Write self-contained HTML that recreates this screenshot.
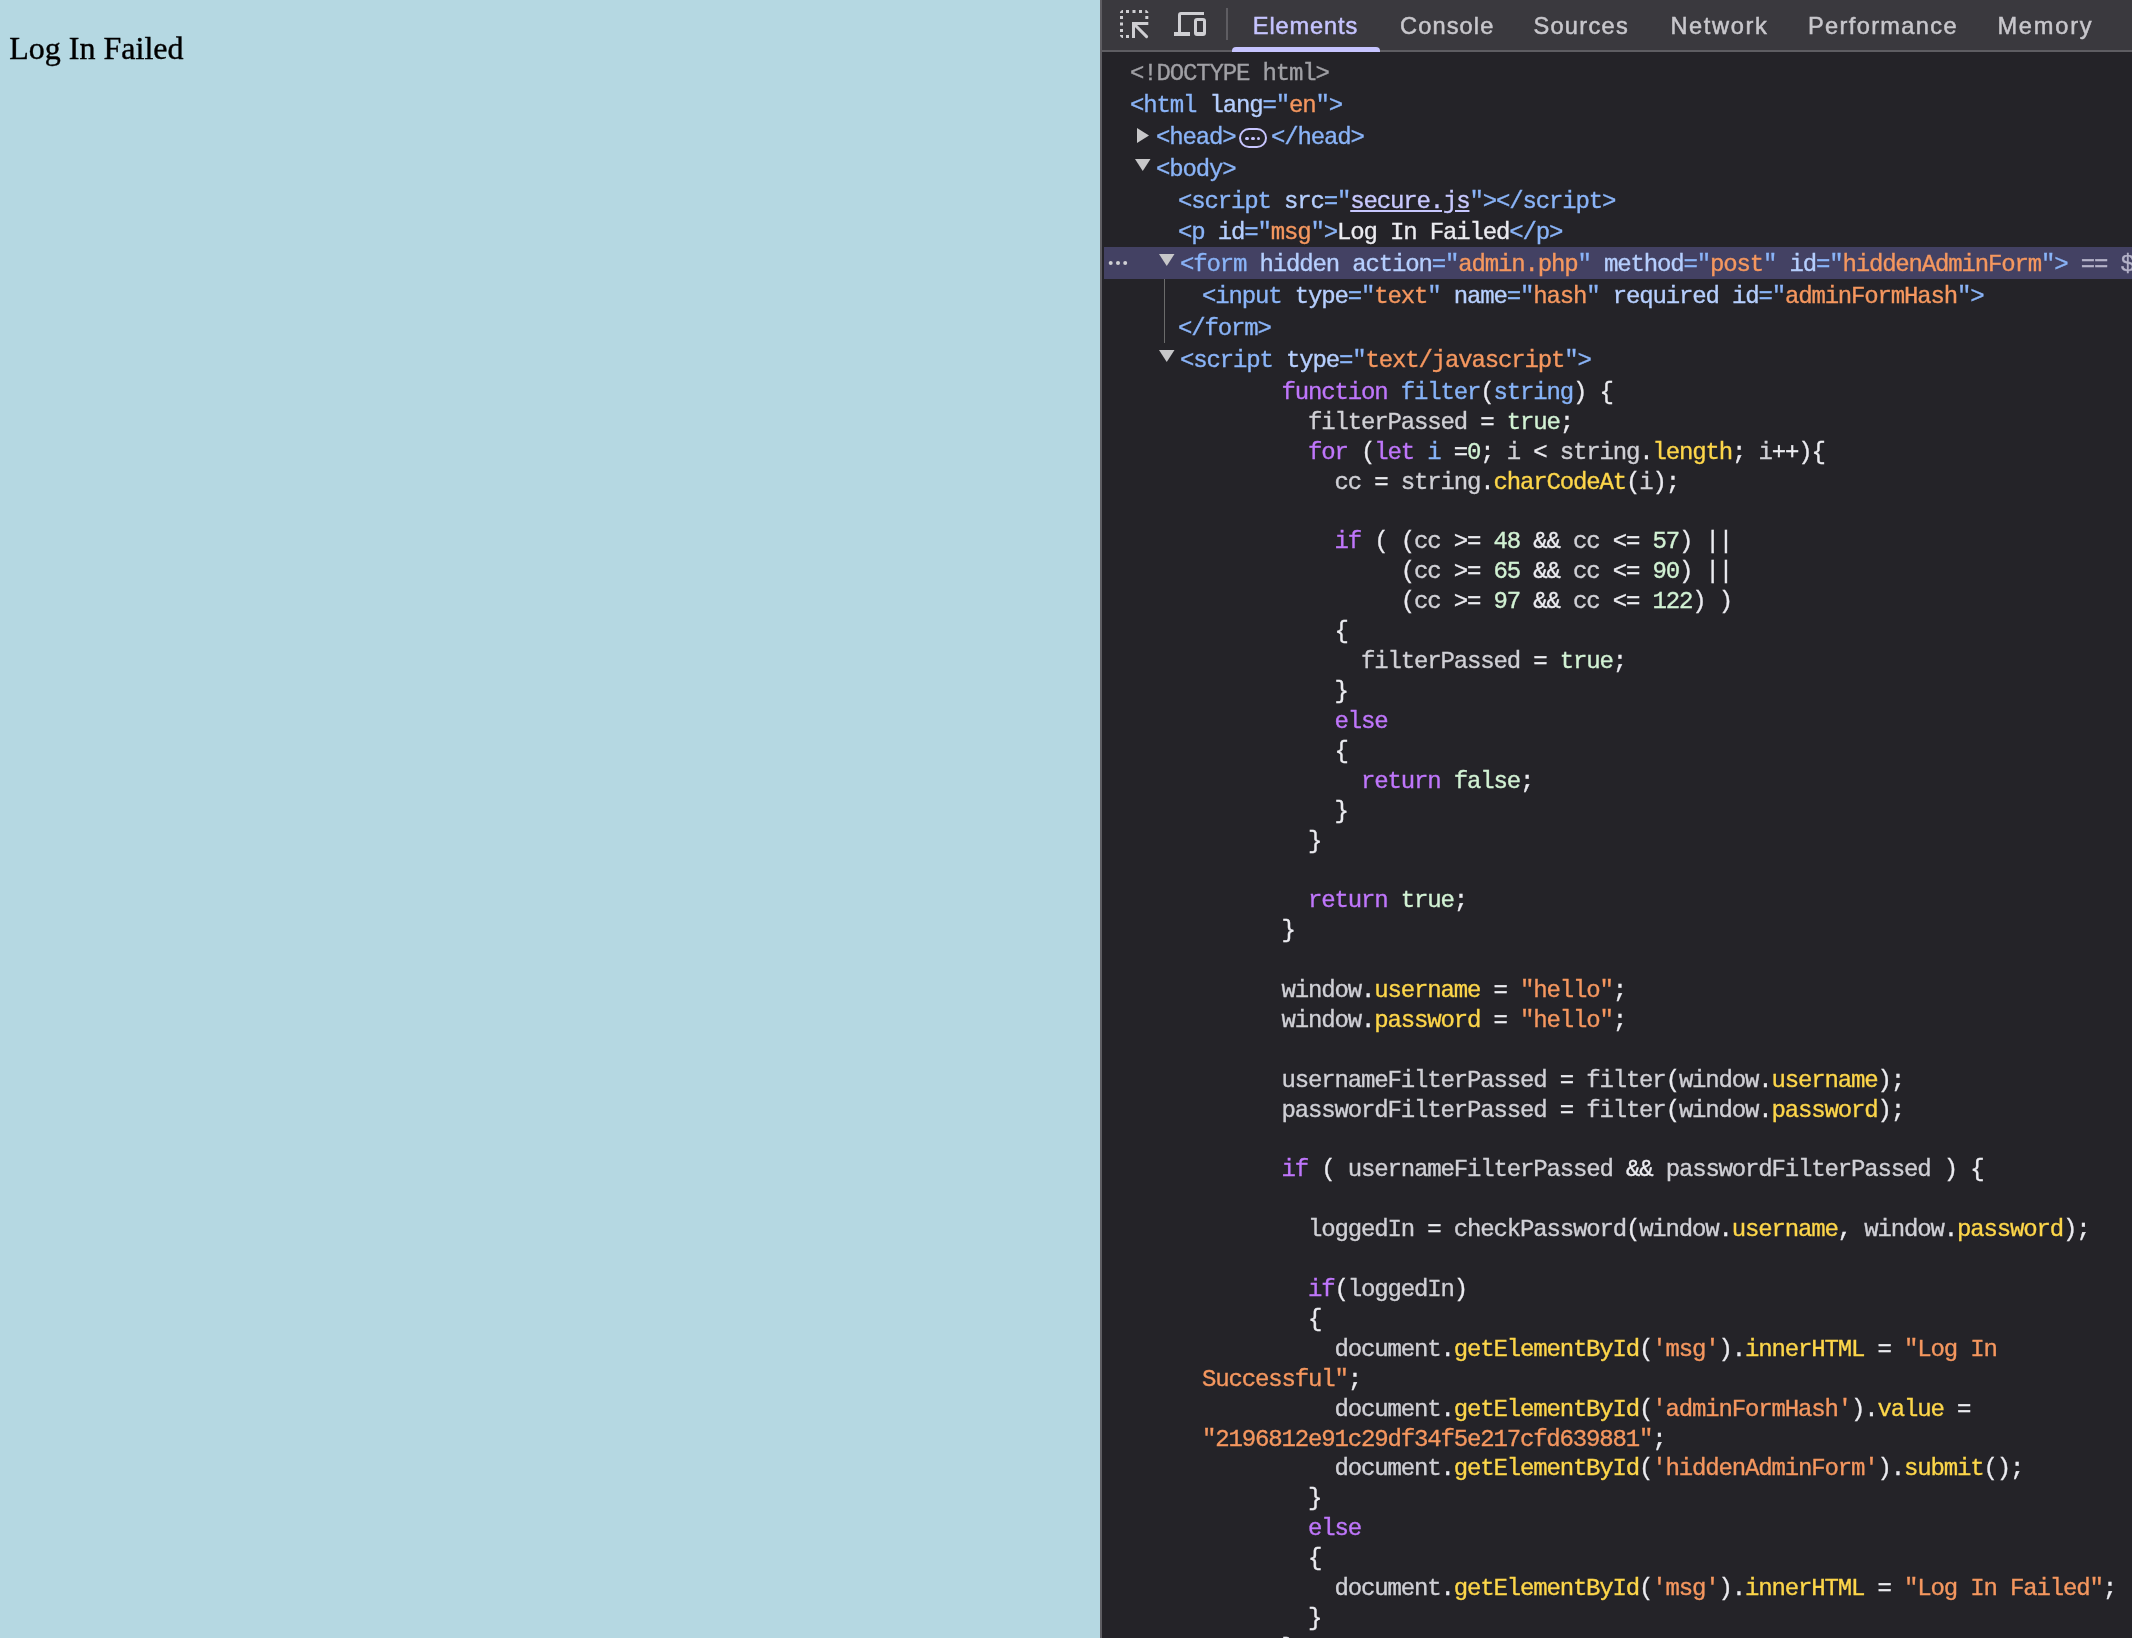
<!DOCTYPE html>
<html><head><meta charset="utf-8"><style>
html,body{margin:0;padding:0}
body{width:2132px;height:1638px;position:relative;overflow:hidden;background:#b5d8e2}
#msg{position:absolute;left:9.3px;top:32px;font:32px/32px "Liberation Serif",serif;color:#000;white-space:nowrap;-webkit-text-stroke:0.4px #000}
#dt{position:absolute;left:1100px;top:0;width:1032px;height:1638px;background:#242328;border-left:2px solid #5e5d62;box-sizing:border-box;overflow:hidden}
#tb{position:absolute;left:1102px;top:0;width:1030px;height:50px;background:#3a393e;border-bottom:2px solid #5e5d62}
.tab{position:absolute;top:11px;font:23.6px/30px "Liberation Sans",sans-serif;color:#c8c7cc;white-space:nowrap;-webkit-text-stroke:0.5px currentColor}
.tab.act{color:#c6c4ff}
#ul{position:absolute;left:1232px;top:47px;width:148px;height:5px;background:#c6c4ff;border-radius:4px 4px 0 0}
#sep{position:absolute;left:1226px;top:8px;width:2px;height:32px;background:#5e5d62}
#sel{position:absolute;left:1104px;top:247px;width:1028px;height:32px;background:#434163}
.ln{position:absolute;font:24px/30px "Liberation Mono",monospace;letter-spacing:-1.1573px;-webkit-text-stroke:0.35px currentColor;white-space:pre;color:#d0d0d6}
.tag{color:#8ab4f8} .attr{color:#b6cffe} .val{color:#f5975f} .txt{color:#ebebf0} .doc{color:#a0a0a5}
.link{color:#c8c8ff;text-decoration:underline;text-underline-offset:2px}
.eq{color:#b4b2c8}
.kw{color:#bf76fb} .defn{color:#87b3f8} .num{color:#d2f2d4} .prop{color:#fdd64a} .str{color:#f5975f} .dflt{color:#d0d0d6} .pn{color:#ebebf0}
.badge{display:inline-block;position:relative;width:24px;height:16px;border:2px solid #c8c6ff;border-radius:10px;vertical-align:-4px;margin:0 4px 0 3.5px;letter-spacing:0}
.badge i{position:absolute;top:6.5px;width:3.4px;height:3.4px;border-radius:50%;background:#c8c6ff}
.badge i:nth-child(1){left:4.5px} .badge i:nth-child(2){left:10.3px} .badge i:nth-child(3){left:16.1px}
.tri{position:absolute;width:0;height:0}
#guide{position:absolute;left:1164px;top:279px;width:1px;height:64px;background:#6b6b6b}
.dot{position:absolute;width:4px;height:4px;border-radius:50%;background:#d0d0d4}
</style></head>
<body>
<div id="dt"></div>
<div id="wrap" style="position:absolute;left:0;top:0;width:2132px;height:1638px;will-change:transform">
<div id="msg">Log In Failed</div>
<div id="tb"></div>
<div id="sep"></div>

<svg style="position:absolute;left:1110px;top:0" width="110" height="50" viewBox="1110 0 110 50">
  <g fill="#cfcfd3">
    <path d="M1120 13 V12 L1122 10 H1123 V13 Z"/><rect x="1126" y="10" width="3" height="3"/><rect x="1132.5" y="10" width="3" height="3"/><rect x="1139" y="10" width="3" height="3"/><path d="M1145.3 10 V13 H1148.3 V12 L1146.3 10 Z"/>
    <rect x="1120" y="16" width="3" height="3"/><rect x="1145.3" y="16" width="3" height="3"/>
    <rect x="1120" y="22.5" width="3" height="3"/><rect x="1120" y="29" width="3" height="3"/><path d="M1120 35 H1123 V38 H1122 L1120 36 Z"/><rect x="1126" y="35" width="3" height="3"/>
    <rect x="1132" y="22" width="16.3" height="3"/><rect x="1132" y="22" width="3" height="16"/>
  </g>
  <path d="M1134 24 L1146.6 36.6" stroke="#cfcfd3" stroke-width="3" stroke-linecap="round"/>
  <g fill="none" stroke="#cfcfd3" stroke-width="3">
    <path d="M1179.5 34 V15 Q1179.5 13.5 1181 13.5 H1204"/>
  </g>
  <path fill="#cfcfd3" fill-rule="evenodd" d="M1197 18 H1203 Q1206 18 1206 21 V33 Q1206 36 1203 36 H1197 Q1194 36 1194 33 V21 Q1194 18 1197 18 Z M1197 21 V32 H1203 V21 Z"/>
  <rect x="1174" y="32" width="16" height="4" fill="#cfcfd3"/>
</svg>

<div class="tab act" style="left:1252.8px;letter-spacing:0.871px">Elements</div>
<div class="tab" style="left:1400.0px;letter-spacing:1.133px">Console</div>
<div class="tab" style="left:1533.4px;letter-spacing:1.300px">Sources</div>
<div class="tab" style="left:1670.4px;letter-spacing:1.633px">Network</div>
<div class="tab" style="left:1808.0px;letter-spacing:1.350px">Performance</div>
<div class="tab" style="left:1997.4px;letter-spacing:1.800px">Memory</div>

<div id="ul"></div>
<div id="sel"></div>
<div id="guide"></div>

<svg style="position:absolute;left:1100px;top:0" width="100" height="400" viewBox="1100 0 100 400">
  <g fill="#c7c7c9">
   <path d="M1137 128 L1149 135.5 L1137 143 Z"/>
   <path d="M1135 159 L1150.5 159 L1142.75 171 Z"/>
   <path d="M1159 254 L1174.5 254 L1166.75 266 Z"/>
   <path d="M1159 350 L1174.5 350 L1166.75 362 Z"/>
  </g>
  <g fill="#d0d0d4"><circle cx="1110.7" cy="263" r="2"/><circle cx="1118" cy="263" r="2"/><circle cx="1125.2" cy="263" r="2"/></g>
</svg>

<div class="ln" style="left:1130px;top:59px"><span class="doc">&lt;!DOCTYPE html&gt;</span></div>
<div class="ln" style="left:1130px;top:91px"><span class="tag">&lt;html</span> <span class="attr">lang</span><span class="tag">="</span><span class="val">en</span><span class="tag">"&gt;</span></div>
<div class="ln" style="left:1156px;top:123px"><span class="tag">&lt;head&gt;</span><span class="badge"><i></i><i></i><i></i></span><span class="tag">&lt;/head&gt;</span></div>
<div class="ln" style="left:1156px;top:155px"><span class="tag">&lt;body&gt;</span></div>
<div class="ln" style="left:1178px;top:187px"><span class="tag">&lt;script</span> <span class="attr">src</span><span class="tag">="</span><span class="link">secure.js</span><span class="tag">"&gt;&lt;/script&gt;</span></div>
<div class="ln" style="left:1178px;top:218px"><span class="tag">&lt;p</span> <span class="attr">id</span><span class="tag">="</span><span class="val">msg</span><span class="tag">"&gt;</span><span class="txt">Log In Failed</span><span class="tag">&lt;/p&gt;</span></div>
<div class="ln" style="left:1180px;top:250px"><span class="tag">&lt;form</span> <span class="attr">hidden</span> <span class="attr">action</span><span class="tag">="</span><span class="val">admin.php</span><span class="tag">"</span> <span class="attr">method</span><span class="tag">="</span><span class="val">post</span><span class="tag">"</span> <span class="attr">id</span><span class="tag">="</span><span class="val">hiddenAdminForm</span><span class="tag">"&gt;</span><span class="eq"> == $0</span></div>
<div class="ln" style="left:1202px;top:282px"><span class="tag">&lt;input</span> <span class="attr">type</span><span class="tag">="</span><span class="val">text</span><span class="tag">"</span> <span class="attr">name</span><span class="tag">="</span><span class="val">hash</span><span class="tag">"</span> <span class="attr">required</span> <span class="attr">id</span><span class="tag">="</span><span class="val">adminFormHash</span><span class="tag">"&gt;</span></div>
<div class="ln" style="left:1178px;top:314px"><span class="tag">&lt;/form&gt;</span></div>
<div class="ln" style="left:1180px;top:346px"><span class="tag">&lt;script</span> <span class="attr">type</span><span class="tag">="</span><span class="val">text/javascript</span><span class="tag">"&gt;</span></div>

<div class="ln" style="left:1202px;top:378px">      <span class="kw">function</span> <span class="defn">filter</span><span class="pn">(</span><span class="defn">string</span><span class="pn">)</span> <span class="pn">{</span></div>
<div class="ln" style="left:1202px;top:408px">        <span class="dflt">filterPassed</span> <span class="pn">=</span> <span class="num">true</span><span class="pn">;</span></div>
<div class="ln" style="left:1202px;top:438px">        <span class="kw">for</span> <span class="pn">(</span><span class="kw">let</span> <span class="defn">i</span> <span class="pn">=</span><span class="num">0</span><span class="pn">;</span> <span class="dflt">i</span> <span class="pn">&lt;</span> <span class="dflt">string</span><span class="pn">.</span><span class="prop">length</span><span class="pn">;</span> <span class="dflt">i</span><span class="pn">+</span><span class="pn">+</span><span class="pn">)</span><span class="pn">{</span></div>
<div class="ln" style="left:1202px;top:468px">          <span class="dflt">cc</span> <span class="pn">=</span> <span class="dflt">string</span><span class="pn">.</span><span class="prop">charCodeAt</span><span class="pn">(</span><span class="dflt">i</span><span class="pn">)</span><span class="pn">;</span></div>
<div class="ln" style="left:1202px;top:527px">          <span class="kw">if</span> <span class="pn">(</span> <span class="pn">(</span><span class="dflt">cc</span> <span class="pn">&gt;</span><span class="pn">=</span> <span class="num">48</span> <span class="pn">&amp;</span><span class="pn">&amp;</span> <span class="dflt">cc</span> <span class="pn">&lt;</span><span class="pn">=</span> <span class="num">57</span><span class="pn">)</span> <span class="pn">|</span><span class="pn">|</span></div>
<div class="ln" style="left:1202px;top:557px">               <span class="pn">(</span><span class="dflt">cc</span> <span class="pn">&gt;</span><span class="pn">=</span> <span class="num">65</span> <span class="pn">&amp;</span><span class="pn">&amp;</span> <span class="dflt">cc</span> <span class="pn">&lt;</span><span class="pn">=</span> <span class="num">90</span><span class="pn">)</span> <span class="pn">|</span><span class="pn">|</span></div>
<div class="ln" style="left:1202px;top:587px">               <span class="pn">(</span><span class="dflt">cc</span> <span class="pn">&gt;</span><span class="pn">=</span> <span class="num">97</span> <span class="pn">&amp;</span><span class="pn">&amp;</span> <span class="dflt">cc</span> <span class="pn">&lt;</span><span class="pn">=</span> <span class="num">122</span><span class="pn">)</span> <span class="pn">)</span></div>
<div class="ln" style="left:1202px;top:617px">          <span class="pn">{</span></div>
<div class="ln" style="left:1202px;top:647px">            <span class="dflt">filterPassed</span> <span class="pn">=</span> <span class="num">true</span><span class="pn">;</span></div>
<div class="ln" style="left:1202px;top:677px">          <span class="pn">}</span></div>
<div class="ln" style="left:1202px;top:707px">          <span class="kw">else</span></div>
<div class="ln" style="left:1202px;top:737px">          <span class="pn">{</span></div>
<div class="ln" style="left:1202px;top:767px">            <span class="kw">return</span> <span class="num">false</span><span class="pn">;</span></div>
<div class="ln" style="left:1202px;top:797px">          <span class="pn">}</span></div>
<div class="ln" style="left:1202px;top:827px">        <span class="pn">}</span></div>
<div class="ln" style="left:1202px;top:886px">        <span class="kw">return</span> <span class="num">true</span><span class="pn">;</span></div>
<div class="ln" style="left:1202px;top:916px">      <span class="pn">}</span></div>
<div class="ln" style="left:1202px;top:976px">      <span class="dflt">window</span><span class="pn">.</span><span class="prop">username</span> <span class="pn">=</span> <span class="str">"hello"</span><span class="pn">;</span></div>
<div class="ln" style="left:1202px;top:1006px">      <span class="dflt">window</span><span class="pn">.</span><span class="prop">password</span> <span class="pn">=</span> <span class="str">"hello"</span><span class="pn">;</span></div>
<div class="ln" style="left:1202px;top:1066px">      <span class="dflt">usernameFilterPassed</span> <span class="pn">=</span> <span class="dflt">filter</span><span class="pn">(</span><span class="dflt">window</span><span class="pn">.</span><span class="prop">username</span><span class="pn">)</span><span class="pn">;</span></div>
<div class="ln" style="left:1202px;top:1096px">      <span class="dflt">passwordFilterPassed</span> <span class="pn">=</span> <span class="dflt">filter</span><span class="pn">(</span><span class="dflt">window</span><span class="pn">.</span><span class="prop">password</span><span class="pn">)</span><span class="pn">;</span></div>
<div class="ln" style="left:1202px;top:1155px">      <span class="kw">if</span> <span class="pn">(</span> <span class="dflt">usernameFilterPassed</span> <span class="pn">&amp;</span><span class="pn">&amp;</span> <span class="dflt">passwordFilterPassed</span> <span class="pn">)</span> <span class="pn">{</span></div>
<div class="ln" style="left:1202px;top:1215px">        <span class="dflt">loggedIn</span> <span class="pn">=</span> <span class="dflt">checkPassword</span><span class="pn">(</span><span class="dflt">window</span><span class="pn">.</span><span class="prop">username</span><span class="pn">,</span> <span class="dflt">window</span><span class="pn">.</span><span class="prop">password</span><span class="pn">)</span><span class="pn">;</span></div>
<div class="ln" style="left:1202px;top:1275px">        <span class="kw">if</span><span class="pn">(</span><span class="dflt">loggedIn</span><span class="pn">)</span></div>
<div class="ln" style="left:1202px;top:1305px">        <span class="pn">{</span></div>
<div class="ln" style="left:1202px;top:1335px">          <span class="dflt">document</span><span class="pn">.</span><span class="prop">getElementById</span><span class="pn">(</span><span class="str">'msg'</span><span class="pn">)</span><span class="pn">.</span><span class="prop">innerHTML</span> <span class="pn">=</span> <span class="str">"Log In</span></div>
<div class="ln" style="left:1202px;top:1365px"><span class="str">Successful"</span><span class="pn">;</span></div>
<div class="ln" style="left:1202px;top:1395px">          <span class="dflt">document</span><span class="pn">.</span><span class="prop">getElementById</span><span class="pn">(</span><span class="str">'adminFormHash'</span><span class="pn">)</span><span class="pn">.</span><span class="prop">value</span> <span class="pn">=</span></div>
<div class="ln" style="left:1202px;top:1425px"><span class="str">"2196812e91c29df34f5e217cfd639881"</span><span class="pn">;</span></div>
<div class="ln" style="left:1202px;top:1454px">          <span class="dflt">document</span><span class="pn">.</span><span class="prop">getElementById</span><span class="pn">(</span><span class="str">'hiddenAdminForm'</span><span class="pn">)</span><span class="pn">.</span><span class="prop">submit</span><span class="pn">(</span><span class="pn">)</span><span class="pn">;</span></div>
<div class="ln" style="left:1202px;top:1484px">        <span class="pn">}</span></div>
<div class="ln" style="left:1202px;top:1514px">        <span class="kw">else</span></div>
<div class="ln" style="left:1202px;top:1544px">        <span class="pn">{</span></div>
<div class="ln" style="left:1202px;top:1574px">          <span class="dflt">document</span><span class="pn">.</span><span class="prop">getElementById</span><span class="pn">(</span><span class="str">'msg'</span><span class="pn">)</span><span class="pn">.</span><span class="prop">innerHTML</span> <span class="pn">=</span> <span class="str">"Log In Failed"</span><span class="pn">;</span></div>
<div class="ln" style="left:1202px;top:1604px">        <span class="pn">}</span></div>
<div class="ln" style="left:1202px;top:1634px">      <span class="pn">}</span></div>

</div>
</body></html>
